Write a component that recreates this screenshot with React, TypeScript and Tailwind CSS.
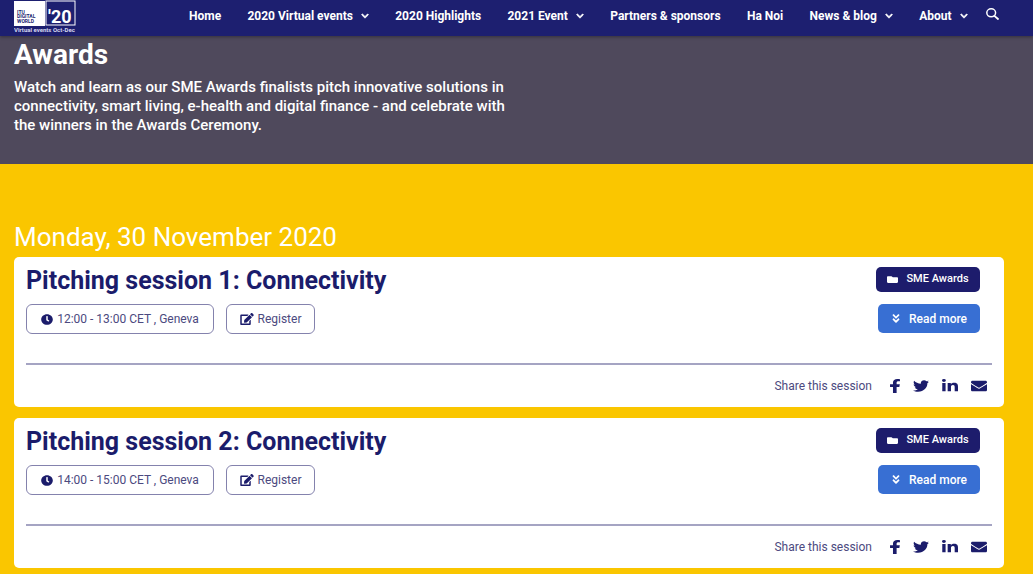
import { FaAngleDoubleDown, FaChevronDown, FaClock, FaEdit, FaEnvelope, FaFacebookF, FaFolder, FaLinkedinIn, FaTwitter } from 'react-icons/fa'

const NAV = [
  { label: 'Home' },
  { label: '2020 Virtual events', menu: true },
  { label: '2020 Highlights' },
  { label: '2021 Event', menu: true },
  { label: 'Partners & sponsors' },
  { label: 'Ha Noi' },
  { label: 'News & blog', menu: true },
  { label: 'About', menu: true },
]

const SESSIONS = [
  { title: 'Pitching session 1: Connectivity', time: '12:00 - 13:00 CET , Geneva' },
  { title: 'Pitching session 2: Connectivity', time: '14:00 - 15:00 CET , Geneva' },
]

const SHARE = [
  { label: 'Facebook', icon: <FaFacebookF className="h-[14px] w-[10px]" viewBox="22 0 276 512" preserveAspectRatio="none" /> },
  { label: 'Twitter', icon: <FaTwitter className="h-[14px] w-4" preserveAspectRatio="none" /> },
  { label: 'LinkedIn', icon: <FaLinkedinIn className="h-[14px] w-4" preserveAspectRatio="none" /> },
  { label: 'Email', icon: <FaEnvelope className="h-[14px] w-4" preserveAspectRatio="none" /> },
]

function Logo() {
  return (
    <a href="#" aria-label="ITU Digital World 2020" className="shrink-0">
      <svg width="64" height="34" viewBox="0 0 64 34" fontFamily="Roboto, sans-serif" fontWeight="700">
        <rect x="0" y="1" width="31" height="25" fill="#fff" />
        <g fill="#1d1f70" fontSize="5">
          <text x="3" y="14">ITU</text>
          <text x="3" y="18">DIGITAL</text>
          <text x="3" y="23">WORLD</text>
        </g>
        <rect x="32" y="1" width="29" height="24" fill="none" stroke="#fff" strokeWidth="1" />
        <text x="34" y="23" fill="#fff" fontSize="18">'20</text>
        <text x="0" y="32" fill="#d6d7ee" fontSize="6">Virtual events Oct-Dec</text>
      </svg>
    </a>
  )
}

function Header() {
  return (
    <header className="relative flex h-9 items-start bg-[#1d1f70] pl-[14px] pr-[34px] text-white shadow-[0_1px_3px_rgba(0,0,0,0.35)]">
      <Logo />
      <nav className="ml-[111px] flex h-[31px] flex-1 items-center justify-between text-xs font-bold whitespace-nowrap">
        {NAV.map(n => (
          <a key={n.label} href="#" className="flex items-center gap-2">
            {n.label}
            {n.menu && <FaChevronDown className="h-2 w-2" strokeWidth="40" stroke="currentColor" />}
          </a>
        ))}
        <button aria-label="Search" className="-ml-2 pb-1">
          <svg className="h-3 w-[13px]" viewBox="0 0 13 12" fill="none" stroke="currentColor">
            <ellipse cx="5.2" cy="4.8" rx="4.4" ry="4" strokeWidth="1.5" />
            <path d="M8.4 7.8l3.6 3.2" strokeWidth="1.8" strokeLinecap="round" />
          </svg>
        </button>
      </nav>
    </header>
  )
}

function SessionCard({ title, time }: { title: string; time: string }) {
  return (
    <article className="rounded-[5px] bg-white px-3 pt-[10px] text-[#4c4a80]">
      <div className="flex justify-between pr-3">
        <div>
          <h3 className="pt-px text-[25px] leading-[26px] font-bold text-[#1b1c6b]">{title}</h3>
          <div className="mt-[10px] flex gap-3 text-xs">
            <span className="flex h-[30px] w-[188px] items-center justify-center gap-1 rounded-md border border-[#8482ad]">
              <FaClock className="h-[11px] w-3 text-[#1b1c6b]" preserveAspectRatio="none" />{time}
            </span>
            <button className="flex h-[30px] w-[89px] items-center justify-center gap-1 rounded-md border border-[#8482ad]">
              <FaEdit className="h-3 w-[14px] text-[#1b1c6b]" />Register
            </button>
          </div>
        </div>
        <div className="flex flex-col items-end gap-3 font-medium text-white">
          <a href="#" className="flex h-[25px] w-[104px] items-center justify-center gap-2 rounded-[5px] bg-[#1d1c6c] text-[11px]">
            <FaFolder className="h-[9px] w-[11px]" preserveAspectRatio="none" />SME Awards
          </a>
          <button className="flex h-[29px] w-[102px] items-center justify-center gap-2 rounded-[5px] bg-[#386fd3] text-xs">
            <FaAngleDoubleDown className="h-[11px] w-[10px]" />Read more
          </button>
        </div>
      </div>
      <div className="mt-[29px] flex h-[44px] items-center justify-end border-t-2 border-[#a5a4c3] pr-[5px] text-xs">
        Share this session
        <div className="ml-[18px] flex items-center gap-[13px] text-[#1b1c6b]">
          {SHARE.map(s => <a key={s.label} href="#" aria-label={s.label}>{s.icon}</a>)}
        </div>
      </div>
    </article>
  )
}

export default function App() {
  return (
    <div className="min-h-screen bg-[#fac600] font-[Roboto,sans-serif]">
      <Header />
      <section className="bg-[#4f495c] px-[14px] pt-[3px] pb-[29px] text-white">
        <h1 className="text-[28px] leading-8 font-bold">Awards</h1>
        <p className="mt-[7px] text-[15px] leading-[19px] font-medium">
          Watch and learn as our SME Awards finalists pitch innovative solutions in<br />
          connectivity, smart living, e-health and digital finance - and celebrate with<br />
          the winners in the Awards Ceremony.
        </p>
      </section>
      <main className="pt-[57px] pr-[29px] pb-[5px] pl-[14px]">
        <h2 className="text-[26px] leading-8 text-white">Monday, 30 November 2020</h2>
        <div className="mt-1 flex flex-col gap-[11px]">
          {SESSIONS.map(s => <SessionCard key={s.title} {...s} />)}
        </div>
      </main>
    </div>
  )
}
